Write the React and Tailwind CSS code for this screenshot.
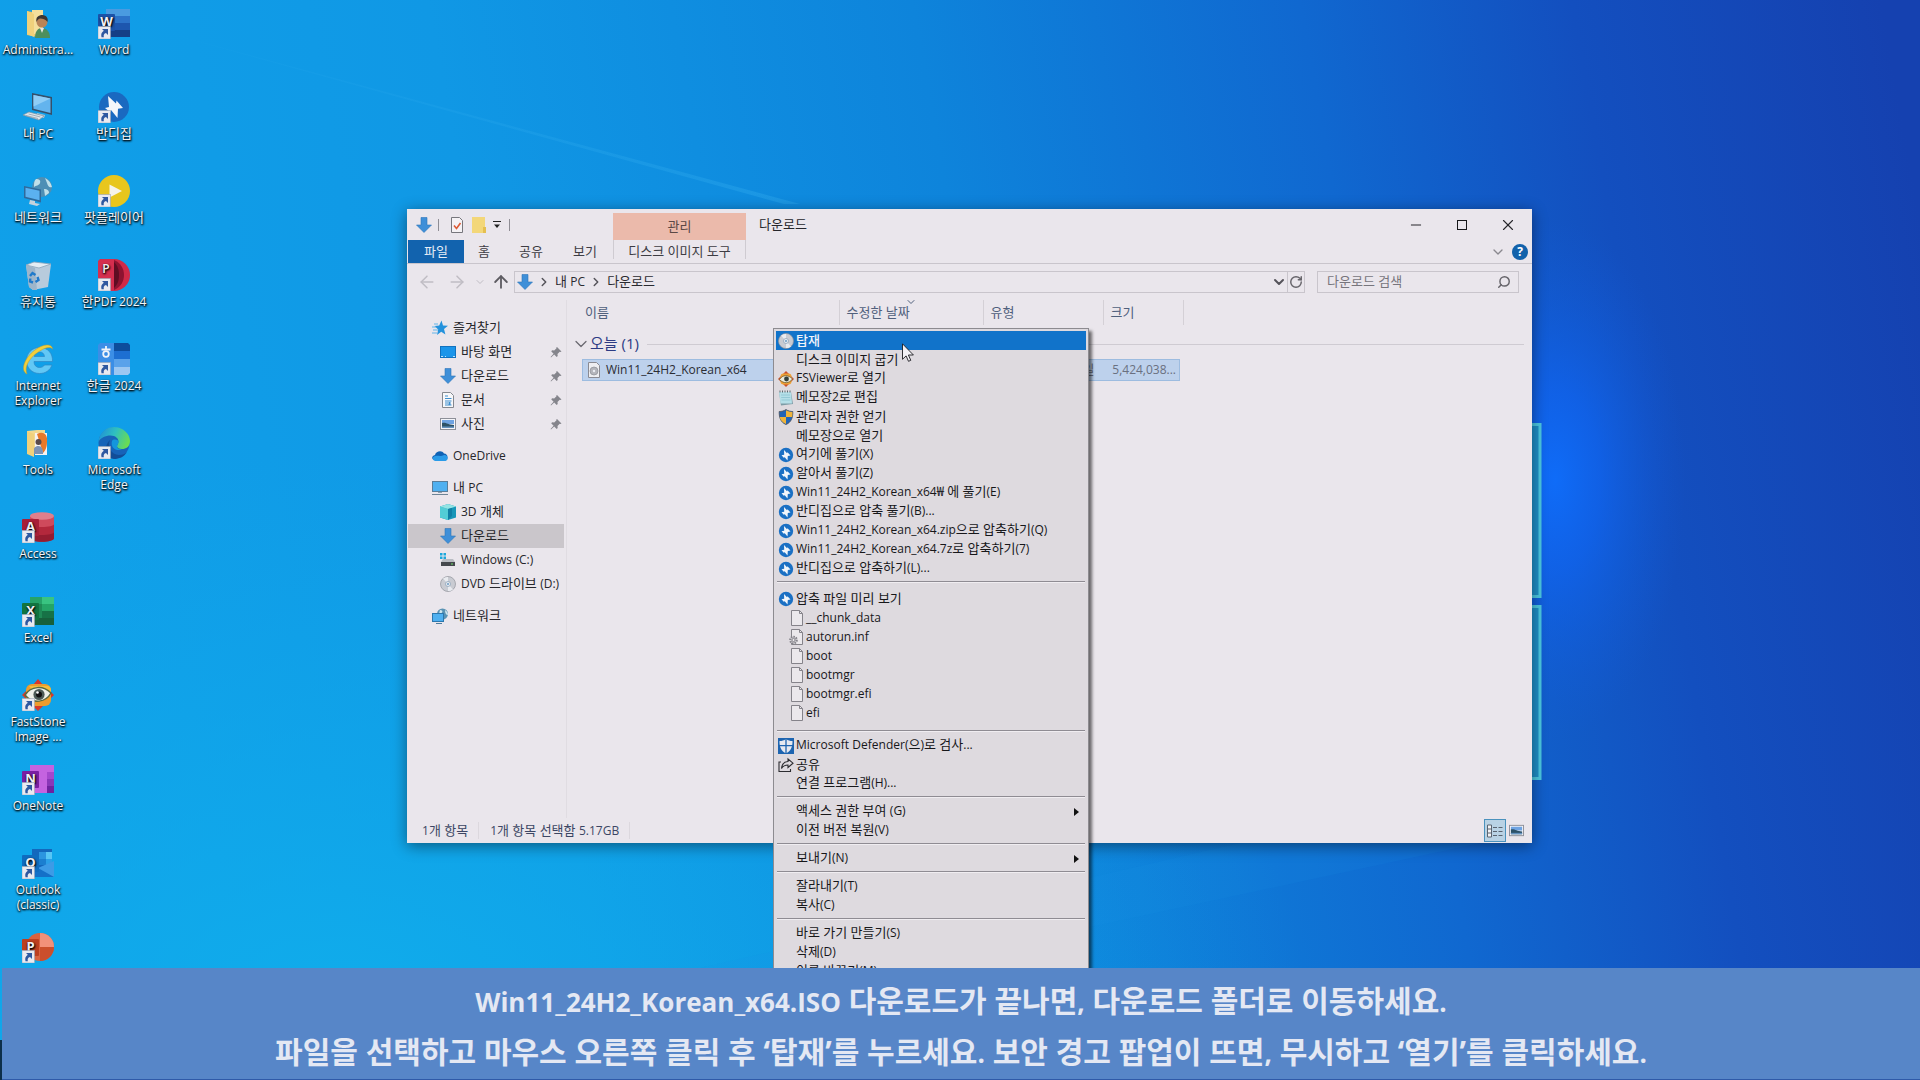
import { ChevronDown, ChevronRight, ArrowLeft, ArrowRight, ArrowUp, RotateCw, Search, Minus, X } from "lucide-react";

/* ---------- text ---------- */

// Latin runs are set a little smaller than the Hangul around them
function Label({ children, className = "", latin = "text-[12px]" }) {
  return (
    <span className={`whitespace-pre ${className}`}>
      {children.split(/([!-~]+)/).map((run, i) =>
        i % 2 ? (
          <span key={i} className={latin}>
            {run}
          </span>
        ) : (
          run
        )
      )}
    </span>
  );
}

/* ---------- desktop icons ---------- */

function ShortcutArrow() {
  return (
    <g>
      <rect x="0" y="19.500" width="12.500" height="12.500" fill="#e9eaf0" stroke="#9aa3b5" strokeWidth=".6" />
      <path d="M4 22h6v6l-2-2c-2 .6-2.600 1.800-2.200 4.200H3.500c-.8-3 .2-5 2.300-6.400z" fill="#2f58a0" />
    </g>
  );
}

function OfficeLetter({ letter, color, y = 7 }) {
  return (
    <g>
      <rect x="0" y={y} width="17" height="17" rx="1" fill={color} />
      <text x="8.500" y={y + 12} textAnchor="middle" fontSize="13" fontWeight="700" fontFamily="Open Sans" fill="#f3f0f5">
        {letter}
      </text>
    </g>
  );
}

function UserFolder() {
  return (
    <svg viewBox="0 0 32 32" className="size-8">
      <path d="M5 4l10 2v24L5 28z" fill="#ecc766" />
      <path d="M10 3h11v24H10z" fill="#f5df9c" />
      <path d="M5 4l7 3v23l-7-3z" fill="#f0d17c" />
      <path d="M13 31c0-7 3-10 7-10s8 3 8 10z" fill="#4d8f5e" />
      <path d="M18 21l2 5 2-5z" fill="#e9e4e4" />
      <circle cx="20" cy="15" r="5.500" fill="#b98458" />
      <path d="M14.500 15c-1-5 2-7 6-7 4 .4 6 3 5 7-2-3-5-3.500-7-3.500-2 0-3 1.500-4 3.500z" fill="#3c3532" />
    </svg>
  );
}

function PcIcon() {
  return (
    <svg viewBox="0 0 32 32" className="size-8">
      <path d="M10 2l20 4v18l-20-5z" fill="#35506b" />
      <path d="M11.500 4l17 3.500v14.500l-17-4.200z" fill="#63b4ee" />
      <path d="M11.500 4l17 3.500-17 8z" fill="#8fcdf6" />
      <path d="M15 22l8 2-1 3-8-2z" fill="#b9c6d0" />
      <path d="M1 24l6-3 15 4-5 4z" fill="#dfe6ea" stroke="#7d92a2" strokeWidth=".7" />
      <path d="M4 24.500l12 3M6.500 23l12 3" stroke="#8fa0ae" strokeWidth=".8" />
    </svg>
  );
}

function NetworkIcon({ className = "size-8" }) {
  return (
    <svg viewBox="0 0 32 32" className={className}>
      <circle cx="20" cy="12" r="10" fill="#4e8fb5" />
      <path d="M14 4c3 0 5 1 4 4s-4 2-6 4c0-4 0-6 2-8zM23 3c4 2 6 5 7 9-3 1-4-1-5-4zM22 14c3 0 5 1 5 4l-4 3z" fill="#bfe0ea" />
      <path d="M2 11l17 3.500v13L2 23z" fill="#2f6a9c" />
      <path d="M3.500 12.800l14 3v9.500l-14-3.500z" fill="#5bb1f0" />
      <path d="M8 25l5 1v2l5 1-3 2-8-2z" fill="#c4d2dc" />
    </svg>
  );
}

// the little tree version has a flat screen in front of the globe
function NetworkSmall() {
  return (
    <svg viewBox="0 0 16 16" className="size-4">
      <circle cx="10.500" cy="6" r="5.500" fill="#5a93b4" />
      <path d="M8 2c2 0 3 1 2 2.500S8 5 7 6zM13 2c2 1 3 3 3 5-2 0-3-2-3-5z" fill="#cfe6ee" />
      <rect x=".5" y="5.500" width="11" height="8" fill="#4fb0f0" stroke="#2c77ad" />
      <path d="M4 15.500h6" stroke="#4f7d9c" />
    </svg>
  );
}

function RecycleBin() {
  return (
    <svg viewBox="0 0 32 32" className="size-8">
      <path d="M4 6l25-1-3 23-15 3-4-3z" fill="#b8cbdc" />
      <path d="M4 6l9 3 2 22-4 0-4-3z" fill="#9db5ca" />
      <path d="M4 6l8-3 17 2-12 4z" fill="#e4edf4" stroke="#8da5ba" strokeWidth=".8" />
      <g fill="none" stroke="#1f7acb" strokeWidth="2.400">
        <path d="M8 17l2.500-3 3 2" />
        <path d="M15.500 18l1 3-3 2" />
        <path d="M11 23.500l-3-1 .3-3" />
      </g>
    </svg>
  );
}

function InternetExplorer() {
  return (
    <svg viewBox="0 0 32 32" className="size-8">
      <path
        d="M30.500 18.500H12c0 3.500 2 6 5.500 6 2.500 0 4-1 5-2.500h7.500c-2 5.500-6.500 8.500-12.500 8.500C10 30.500 4.500 25 4.500 17.500S10 4.500 17.500 4.500c8.500 0 13.500 6 13 14zm-8-5c-.4-3-2-4.500-5-4.500s-4.700 1.500-5.300 4.500z"
        fill="#62c8f5"
        stroke="#2f86c4"
        strokeWidth=".7"
      />
      <path d="M5 31C-2 28 2 15 13 7 21 1 30 0 30.500 6c-2-3-8-1.500-15 3.500C7 15.500 2 24 5 31z" fill="#f1cf3c" stroke="#c69d22" strokeWidth=".5" />
    </svg>
  );
}

function ToolsFolder() {
  return (
    <svg viewBox="0 0 32 32" className="size-8">
      <path d="M5 4l10-1h8v24H5z" fill="#f2d98f" />
      <path d="M13 6h12v22H13z" fill="#f6f3f2" />
      <path d="M15 7c6-3 11 0 10 8 0 6-2 9-4 11z" fill="#e8792a" />
      <circle cx="16.500" cy="15" r="3" fill="#584a4c" />
      <path d="M11 27c0-6 2-8 5.500-8S21 22 21 27z" fill="#7d93b5" />
      <path d="M5 4l7 3v23l-7-3z" fill="#f0d17c" />
    </svg>
  );
}

function WordIcon() {
  return (
    <svg viewBox="0 0 32 32" className="size-8">
      <path d="M8 2h24v8H8z" fill="#4a9be0" />
      <path d="M8 9h24v7H8z" fill="#2c73c9" />
      <path d="M8 16h24v7H8z" fill="#1d56ae" />
      <path d="M8 23h24v7H8z" fill="#153f86" />
      <OfficeLetter letter="W" color="#1b52a8" />
      <ShortcutArrow />
    </svg>
  );
}

function BandizipIcon() {
  return (
    <svg viewBox="0 0 32 32" className="size-8">
      <circle cx="16" cy="16" r="15" fill="#1a69c0" />
      <path d="M10 5l8 7.500.500-3L25 17l-5 .8-.5 9.200-6.500-8-.5 2.500L7 17l4-1z" fill="#f4f7fb" />
      <ShortcutArrow />
    </svg>
  );
}

function PotPlayer() {
  return (
    <svg viewBox="0 0 32 32" className="size-8">
      <circle cx="16" cy="16" r="16" fill="#e8c61d" />
      <path d="M11.500 9.500L24 16l-12.500 6.500z" fill="#f6f3ea" />
      <ShortcutArrow />
    </svg>
  );
}

function HanPdf() {
  return (
    <svg viewBox="0 0 32 32" className="size-8">
      <path d="M13 0h3a16 16 0 010 32h-3z" fill="#d02a48" />
      <path d="M16 1c7 3 10 9 10 15s-3 12-10 15z" fill="#8e1330" />
      <path d="M16 3c4 4 5 8 5 13s-1 9-5 13z" fill="#5e0d22" />
      <path d="M2 0h14v32H0V2z" fill="#d42e4e" />
      <text x="8" y="14" textAnchor="middle" fontSize="12" fontWeight="600" fontFamily="Open Sans" fill="#f4eef0">
        P
      </text>
      <ShortcutArrow />
    </svg>
  );
}

function Hangul2024() {
  return (
    <svg viewBox="0 0 32 32" className="size-8">
      <path d="M16 0h14l2 2v6H16z" fill="#0d4d9c" />
      <path d="M16 8h16v8H16z" fill="#1d6fd2" />
      <path d="M16 16h16v8H16z" fill="#5aa2ea" />
      <path d="M16 24h16v6l-2 2H16z" fill="#9cc7f2" />
      <path d="M2 0h14v32H0V2z" fill="#3b8ee6" />
      <g fill="none" stroke="#f0f4fa" strokeWidth="1.800">
        <path d="M8 3v3M3.500 6.500h9" />
        <circle cx="8" cy="11" r="2.800" />
      </g>
      <ShortcutArrow />
    </svg>
  );
}

function EdgeIcon() {
  return (
    <svg viewBox="0 0 32 32" className="size-8">
      <defs>
        <linearGradient id="edgeTop" x1="0" y1=".2" x2="1" y2=".5">
          <stop offset="0" stopColor="#1f8fd8" />
          <stop offset=".5" stopColor="#2fbfc0" />
          <stop offset="1" stopColor="#6bdc52" />
        </linearGradient>
      </defs>
      <circle cx="16" cy="16" r="15.500" fill="#1763b8" />
      <path d="M.5 15C1 6 8 0 16 0c9 0 16 7 16 14 0 6-4 8-8 8-3 0-5-1-5-3 0-1 1.500-2 1.500-4.500 0-3-3-6-8-6S2 11 .5 15z" fill="url(#edgeTop)" />
      <path d="M12 13c-3 6 1 15 9 15 4 0 6-1 8-3-3 5-8 7-13 7C7 30 5 20 12 13z" fill="#124d97" />
      <path d="M14 14c1-2 6-2 6.500 1 0 2-1.500 3-1.500 4.500 0 2 2 3 5 3-5 2-12-1-10-8.500z" fill="#1496dc" />
      <ShortcutArrow />
    </svg>
  );
}

function AccessIcon() {
  return (
    <svg viewBox="0 0 32 32" className="size-8">
      <path d="M8 5v22c0 5 24 5 24 0V5z" fill="#b3283c" />
      <path d="M8 13c0 4 24 4 24 0V5H8z" fill="#cf4a5c" />
      <path d="M8 21c0 4 24 4 24 0v6c0 5-24 5-24 0z" fill="#951c30" />
      <ellipse cx="20" cy="5" rx="12" ry="3.800" fill="#df7f8c" />
      <OfficeLetter letter="A" color="#a81f38" y={8} />
      <ShortcutArrow />
    </svg>
  );
}

function ExcelIcon() {
  return (
    <svg viewBox="0 0 32 32" className="size-8">
      <path d="M8 2h24v28H8z" fill="#1f8a55" />
      <path d="M20 2h12v7H20z" fill="#39c481" />
      <path d="M8 2h12v7H8z" fill="#26a368" />
      <path d="M20 9h12v7H20z" fill="#25a566" />
      <path d="M8 23h24v7H8z" fill="#17603b" />
      <path d="M20 16h12v7H20z" fill="#177246" />
      <OfficeLetter letter="X" color="#127440" y={8} />
      <ShortcutArrow />
    </svg>
  );
}

function FastStone() {
  return (
    <svg viewBox="0 0 32 32" className="size-8">
      <path d="M16 0l5 6H11zM32 16l-5 5V11zM16 32l-5-5h10zM0 16l5-5v10z" fill="#d8392b" />
      <rect x="4" y="5" width="25" height="22" rx="6" fill="#ee9c2d" />
      <path d="M7 7h18c3 0 4 2 4 5v4H14z" fill="#f5bd3c" />
      <path d="M3 16c6-9 18-10 26-2-5 9-18 12-26 2z" fill="#eef0e8" stroke="#5b6a3f" strokeWidth="1.500" />
      <circle cx="17" cy="15.500" r="5.600" fill="#4c5a55" />
      <circle cx="17" cy="15.500" r="3" fill="#111" />
      <circle cx="15.500" cy="13.500" r="1.300" fill="#fff" />
      <ShortcutArrow />
    </svg>
  );
}

function OneNote() {
  return (
    <svg viewBox="0 0 32 32" className="size-8">
      <path d="M8 2h24v28H8z" fill="#c463e0" />
      <path d="M25 9h7v7h-7z" fill="#a548cc" />
      <path d="M25 16h7v7h-7z" fill="#8a37b8" />
      <path d="M25 23h7v7h-7z" fill="#6f22a0" />
      <OfficeLetter letter="N" color="#7a1fa2" y={8} />
      <ShortcutArrow />
    </svg>
  );
}

function OutlookIcon() {
  return (
    <svg viewBox="0 0 32 32" className="size-8">
      <path d="M10 2h20v20H10z" fill="#1368bd" />
      <path d="M17 5h7v7h-7z" fill="#2b95e0" />
      <path d="M24 5h6v7h-6z" fill="#58c6f5" />
      <path d="M17 12h7v6h-7z" fill="#1b7fd0" />
      <path d="M24 12h6v6h-6z" fill="#2ba0e8" />
      <path d="M16 21l16-6v15H8z" fill="#1470c8" />
      <path d="M16 21l16 9V14z" fill="#3d9be6" />
      <OfficeLetter letter="O" color="#0f6cbf" y={8} />
      <ShortcutArrow />
    </svg>
  );
}

function PowerPointIcon() {
  return (
    <svg viewBox="0 0 32 32" className="size-8">
      <circle cx="18" cy="16" r="14" fill="#d9623f" />
      <path d="M18 2a14 14 0 0114 14H18z" fill="#f2917a" />
      <path d="M32 16a14 14 0 01-14 14V16z" fill="#cb4f2c" />
      <OfficeLetter letter="P" color="#bd3f20" y={8} />
      <ShortcutArrow />
    </svg>
  );
}

/* ---------- small icons ---------- */

function DownArrow({ className = "size-4" }) {
  return (
    <svg viewBox="0 0 16 16" className={className}>
      <path d="M5 .5h6V8h4.500L8 15.500.500 8H5z" fill="#3f8fd8" stroke="#2d75bb" strokeWidth=".6" />
    </svg>
  );
}

function StarIcon() {
  return (
    <svg viewBox="0 0 16 16" className="size-4">
      <path d="M9.500.5l1.500 5 5 .3-4 3.200 1.400 5.500-4.200-2.800L5 15l1.200-5.500L2.500 6l4.700-.5z" fill="#2492dc" />
      <path d="M2 4h4M0 7h4M1 10h5M0 13h5" stroke="#63b5ea" />
    </svg>
  );
}

function DesktopSmall() {
  return (
    <svg viewBox="0 0 16 16" className="size-4">
      <rect x=".5" y="2.500" width="15" height="11" fill="#1b95ea" stroke="#1272bf" />
      <path d="M1 12.500h2M5 12.500h1M13 12.500h2" stroke="#bfe2fa" />
    </svg>
  );
}

function DocSmall() {
  return (
    <svg viewBox="0 0 16 16" className="size-4">
      <path d="M2.500.5h8l3 3v12h-11z" fill="#f7f7f9" stroke="#85888f" />
      <path d="M5 4h3M5 6.500h6.500M5 9h6.500M5 11h3M5 13h6.500" stroke="#3f8fce" />
      <path d="M9.500 10v3" stroke="#3f8fce" strokeWidth="2" />
    </svg>
  );
}

function PictureSmall({ className = "size-4" }) {
  return (
    <svg viewBox="0 0 16 16" className={className}>
      <rect x=".5" y="2.500" width="15" height="11" fill="#f4f4f8" stroke="#8d8f98" />
      <path d="M2 4h12v4H2z" fill="#6fa3e2" />
      <path d="M2 7c4-1 6 2 12 2v3H2z" fill="#2d5268" />
      <path d="M2 10.500h12V12H2z" fill="#6492bf" />
    </svg>
  );
}

function OneDriveIcon() {
  return (
    <svg viewBox="0 0 16 16" className="size-4">
      <path d="M3 12C-1 12-.5 7.500 3 7c1-4 7-5 9-1.500 4 0 5 6 1 7z" fill="#0f62b5" />
      <path d="M3 13c-3-1-3-4 0-5 3-1 5 1 9-1 4-.5 5 5.500 1.500 6z" fill="#2a9be8" />
    </svg>
  );
}

function PcSmall() {
  return (
    <svg viewBox="0 0 16 16" className="size-4">
      <rect x=".5" y="1.500" width="15" height="10" fill="#4fb0f0" stroke="#5a7d98" />
      <path d="M6 12.500h4" stroke="#8ca0b0" />
      <path d="M0 14.500h16" stroke="#6d8496" />
    </svg>
  );
}

function CubeIcon() {
  return (
    <svg viewBox="0 0 16 16" className="size-4">
      <path d="M8 0l8 2.500v11L8 16l-8-2.500v-11z" fill="#1796b8" />
      <path d="M0 2.500L8 5v11l-8-2.500z" fill="#52cdd6" />
      <path d="M0 2.500L8 0l8 2.500L8 5z" fill="#93e4e4" />
      <path d="M8 5l4-1v8l-4 4z" fill="#0f7fa5" />
    </svg>
  );
}

function DriveIcon() {
  return (
    <svg viewBox="0 0 16 16" className="size-4">
      <path d="M0 1h2.500v2.500H0zM3.500 1H6v2.500H3.500zM0 4.500h2.500V7H0zM3.500 4.500H6V7H3.500z" fill="#1ba7dc" />
      <path d="M3 7h10l2 3H1z" fill="#b9bcc2" />
      <path d="M1 10h14v4H1z" fill="#45484d" />
      <path d="M11 12h2" stroke="#6ee06a" />
    </svg>
  );
}

function DiscIcon({ className = "size-4" }) {
  return (
    <svg viewBox="0 0 16 16" className={className}>
      <circle cx="8" cy="8" r="7.500" fill="#c9cbd2" stroke="#90939b" strokeWidth=".7" />
      <path d="M8 8L3 2.500A7 7 0 018 1zM8 8l5 5.500A7 7 0 018 15z" fill="#e9ebf0" />
      <circle cx="8" cy="8" r="2.500" fill="#e9edf2" stroke="#8fa4ba" strokeWidth=".8" />
      <circle cx="8" cy="8" r="1" fill="#6a98c2" />
    </svg>
  );
}

function PinIcon() {
  return (
    <svg viewBox="0 0 12 12" className="size-3">
      <path d="M7 1l4.500 4.500-1 .5-.8-.3L7.500 8l.2 2-1 1L4.200 8.500 1 11.500l-.4-.4 3-3.300L1.200 5.300l1-1 2 .2L6.500 2.200 6.300 1.500z" fill="#85858c" />
    </svg>
  );
}

function IsoFile({ className = "size-4" }) {
  return (
    <svg viewBox="0 0 16 16" className={className}>
      <path d="M2.500.5h8l3 3v12h-11z" fill="#eeeef1" stroke="#8a8a92" />
      <circle cx="8" cy="9" r="4" fill="#b4b5bb" stroke="#8e9097" strokeWidth=".7" />
      <circle cx="8" cy="9" r="1.200" fill="#eceef2" />
    </svg>
  );
}

function PropertiesIcon() {
  return (
    <svg viewBox="0 0 16 16" className="size-4">
      <path d="M2.500.5h8l3 3v12h-11z" fill="#f5f2f5" stroke="#77777d" />
      <path d="M5 8.500l2.500 3L11.500 6" fill="none" stroke="#dd5a35" strokeWidth="1.600" />
    </svg>
  );
}

function FolderSmall() {
  return (
    <svg viewBox="0 0 16 16" className="size-4">
      <path d="M1 0h13v16H1z" fill="#f3d779" />
      <path d="M12 10h3v6h-3z" fill="#e5bf50" />
    </svg>
  );
}

function BandizipSmall() {
  return (
    <svg viewBox="0 0 16 16" className="size-4">
      <circle cx="8" cy="8" r="7.200" fill="#1b70c4" />
      <path d="M6 3l3 3.300.500-1L12.500 8.500l-2.700.5-.3 4.500L6.500 10l-.5 1L3.500 8.200l2.700-.5z" fill="#f2f6fb" />
    </svg>
  );
}

function FastStoneSmall() {
  return (
    <svg viewBox="0 0 16 16" className="size-4">
      <path d="M8 0l8 8-8 8-8-8z" fill="#c9502c" />
      <rect x="2.500" y="2.500" width="11" height="11" rx="3" fill="#eea136" />
      <path d="M1.500 8.500c3-5 9-5 13-.5-3 4.500-9 5-13 .5z" fill="#ecebdc" stroke="#6c5a2c" strokeWidth=".8" />
      <circle cx="8.500" cy="8" r="2.400" fill="#33403a" />
    </svg>
  );
}

function NotepadIcon() {
  return (
    <svg viewBox="0 0 16 16" className="size-4">
      <path d="M1 2h12l2 12-12 1.500z" fill="#7d9ca6" />
      <path d="M1 2h12l1 11.500H2.500z" fill="#b5dfe8" />
      <path d="M3 5h9M3.200 7.500h9M3.500 10h9" stroke="#8dc3d0" strokeWidth=".8" />
      <path d="M2 .5v2M4.500.5v2M7 .5v2M9.500.5v2M12 .5v2" stroke="#5d6b70" />
    </svg>
  );
}

function ShieldIcon() {
  return (
    <svg viewBox="0 0 16 16" className="size-4">
      <path d="M8 .500C6 2 3.500 2.500 1.200 2.500 1 9 3 13.500 8 15.500c5-2 7-6.500 6.800-13C12.500 2.500 10 2 8 .500z" fill="#2164b8" stroke="#4a4e57" strokeWidth=".8" />
      <path d="M8 1.200v6.800h6.200c.2-1.500.3-3 .2-5C12 3 10 2.300 8 1.200zM8 8v7C4.500 13.500 2.300 11 1.700 8z" fill="#f0b43a" />
    </svg>
  );
}

function DefenderIcon() {
  return (
    <svg viewBox="0 0 16 16" className="size-4">
      <path d="M0 0h16v16H0z" fill="#1d64b0" />
      <path d="M8 1C6 2.500 4 3 1.500 3 1.300 9 3.500 13.500 8 15.300 12.500 13.500 14.700 9 14.500 3 12 3 10 2.500 8 1z" fill="#e6e9f0" />
      <path d="M8 0v16M1 7.700h14" stroke="#1d64b0" strokeWidth="1.300" />
    </svg>
  );
}

function ShareIcon() {
  return (
    <svg viewBox="0 0 16 16" className="size-4" fill="none" stroke="#2c2c30" strokeWidth="1.100">
      <path d="M3 5H1v9.500h11.500V12" />
      <path d="M10 2l5 4.200-5 4.300V8C7 8 5 9 3.500 11.500 4 7 6.500 4.700 10 4.500z" />
    </svg>
  );
}

function PageIcon({ gear }) {
  return (
    <svg viewBox="0 0 16 16" className="size-4">
      <path d="M3.500.5h8l3 3v12h-11z" fill="#ebe8ec" stroke="#85838a" />
      <path d="M11.500.5v3h3" fill="none" stroke="#85838a" />
      {gear && <circle cx="5.500" cy="11" r="3.300" fill="#d9d7dc" stroke="#85838a" strokeWidth="2" strokeDasharray="1.500 1" />}
      {gear && <circle cx="5.500" cy="11" r="1.600" fill="#ebe8ec" stroke="#85838a" />}
    </svg>
  );
}

/* ---------- data ---------- */

const DESKTOP = [
  [
    { lines: ["Administra..."], Icon: UserFolder },
    { lines: ["내 PC"], Icon: PcIcon },
    { lines: ["네트워크"], Icon: NetworkIcon },
    { lines: ["휴지통"], Icon: RecycleBin },
    { lines: ["Internet", "Explorer"], Icon: InternetExplorer },
    { lines: ["Tools"], Icon: ToolsFolder },
    { lines: ["Access"], Icon: AccessIcon },
    { lines: ["Excel"], Icon: ExcelIcon },
    { lines: ["FastStone", "Image ..."], Icon: FastStone },
    { lines: ["OneNote"], Icon: OneNote },
    { lines: ["Outlook", "(classic)"], Icon: OutlookIcon },
    { lines: [], name: "PowerPoint", Icon: PowerPointIcon },
  ],
  [
    { lines: ["Word"], Icon: WordIcon },
    { lines: ["반디집"], Icon: BandizipIcon },
    { lines: ["팟플레이어"], Icon: PotPlayer },
    { lines: ["한PDF 2024"], Icon: HanPdf },
    { lines: ["한글 2024"], Icon: Hangul2024 },
    { lines: ["Microsoft", "Edge"], Icon: EdgeIcon },
  ],
];

const SIDEBAR = [
  [
    { label: "즐겨찾기", icon: <StarIcon /> },
    { label: "바탕 화면", icon: <DesktopSmall />, child: true, pinned: true },
    { label: "다운로드", icon: <DownArrow />, child: true, pinned: true },
    { label: "문서", icon: <DocSmall />, child: true, pinned: true },
    { label: "사진", icon: <PictureSmall />, child: true, pinned: true },
  ],
  [{ label: "OneDrive", icon: <OneDriveIcon /> }],
  [
    { label: "내 PC", icon: <PcSmall /> },
    { label: "3D 개체", icon: <CubeIcon />, child: true },
    { label: "다운로드", icon: <DownArrow />, child: true, active: true },
    { label: "Windows (C:)", icon: <DriveIcon />, child: true },
    { label: "DVD 드라이브 (D:)", icon: <DiscIcon />, child: true },
  ],
  [{ label: "네트워크", icon: <NetworkSmall /> }],
];

const MENU = [
  [
    { label: "탑재", icon: <DiscIcon />, active: true },
    { label: "디스크 이미지 굽기" },
    { label: "FSViewer로 열기", icon: <FastStoneSmall /> },
    { label: "메모장2로 편집", icon: <NotepadIcon /> },
    { label: "관리자 권한 얻기", icon: <ShieldIcon /> },
    { label: "메모장으로 열기" },
    { label: "여기에 풀기(X)", icon: <BandizipSmall /> },
    { label: "알아서 풀기(Z)", icon: <BandizipSmall /> },
    { label: "Win11_24H2_Korean_x64₩ 에 풀기(E)", icon: <BandizipSmall /> },
    { label: "반디집으로 압축 풀기(B)...", icon: <BandizipSmall /> },
    { label: "Win11_24H2_Korean_x64.zip으로 압축하기(Q)", icon: <BandizipSmall /> },
    { label: "Win11_24H2_Korean_x64.7z로 압축하기(7)", icon: <BandizipSmall /> },
    { label: "반디집으로 압축하기(L)...", icon: <BandizipSmall /> },
  ],
  [
    { label: "압축 파일 미리 보기", icon: <BandizipSmall /> },
    { label: "__chunk_data", icon: <PageIcon />, child: true },
    { label: "autorun.inf", icon: <PageIcon gear />, child: true },
    { label: "boot", icon: <PageIcon />, child: true },
    { label: "bootmgr", icon: <PageIcon />, child: true },
    { label: "bootmgr.efi", icon: <PageIcon />, child: true },
    { label: "efi", icon: <PageIcon />, child: true },
  ],
  [
    { label: "Microsoft Defender(으)로 검사...", icon: <DefenderIcon /> },
    { label: "공유", icon: <ShareIcon /> },
    { label: "연결 프로그램(H)..." },
  ],
  [{ label: "액세스 권한 부여 (G)", submenu: true }, { label: "이전 버전 복원(V)" }],
  [{ label: "보내기(N)", submenu: true }],
  [{ label: "잘라내기(T)" }, { label: "복사(C)" }],
  [{ label: "바로 가기 만들기(S)" }, { label: "삭제(D)" }, { label: "이름 바꾸기(M)" }],
];

/* ---------- sections ---------- */

function Wallpaper() {
  return (
    <svg viewBox="0 0 1920 1080" preserveAspectRatio="none" className="absolute inset-0 size-full" aria-hidden="true">
      <defs>
        <linearGradient id="base" x1="0" y1="0.300" x2="1" y2="0.200">
          <stop offset="0" stopColor="#10a0e9" />
          <stop offset=".25" stopColor="#1098e5" />
          <stop offset=".5" stopColor="#0e84db" />
          <stop offset=".7" stopColor="#1068d0" />
          <stop offset=".84" stopColor="#134fbf" />
          <stop offset="1" stopColor="#1541b0" />
        </linearGradient>
        <radialGradient id="cyan" cx=".18" cy=".92" r=".5">
          <stop offset="0" stopColor="#10b0ec" stopOpacity=".8" />
          <stop offset="1" stopColor="#10a8ea" stopOpacity="0" />
        </radialGradient>
        <radialGradient id="glow" cx=".5" cy=".5" r=".5">
          <stop offset="0" stopColor="#0f6cf8" />
          <stop offset=".35" stopColor="#1064f0" stopOpacity=".75" />
          <stop offset="1" stopColor="#125ad8" stopOpacity="0" />
        </radialGradient>
        <linearGradient id="ray" x1="0" y1="0" x2="1" y2="0">
          <stop offset="0" stopColor="#3bb4f2" stopOpacity="0" />
          <stop offset="1" stopColor="#3bb4f2" stopOpacity=".3" />
        </linearGradient>
      </defs>
      <rect width="1920" height="1080" fill="url(#base)" />
      <rect width="1920" height="1080" fill="url(#cyan)" />
      <path d="M120 20L800 204H784z" fill="url(#ray)" />
      <path d="M700 968L1240 843H1480L900 968z" fill="#1590e4" opacity=".12" />
      <ellipse cx="1555" cy="480" rx="130" ry="260" fill="url(#glow)" />
      <g fill="#1f8fc8" stroke="#4cc8e2" strokeWidth="3">
        <rect x="1400" y="424.500" width="140" height="172" />
        <rect x="1400" y="606.500" width="140" height="172" />
      </g>
    </svg>
  );
}

function DesktopIcon({ lines, name, Icon }) {
  return (
    <button
      aria-label={name}
      className="flex h-[84px] w-[76px] flex-col items-center pt-[7px] leading-[15px] text-[#f4f6fa] [text-shadow:1px_1px_2px_#000,0_1px_2px_#000]"
    >
      <Icon />
      <span className="mt-[3px] flex flex-col items-center">
        {lines.map((line) => (
          <Label key={line}>{line}</Label>
        ))}
      </span>
    </button>
  );
}

function TitleBar() {
  return (
    <header className="flex h-[31px] items-stretch pr-px">
      <div className="flex w-[206px] items-center gap-1.5 pl-[9px]">
        <DownArrow />
        <i className="mr-1 h-3 w-px bg-[#8f8d94]" />
        <button aria-label="속성">
          <PropertiesIcon />
        </button>
        <button aria-label="새 폴더">
          <FolderSmall />
        </button>
        <button aria-label="빠른 실행 도구 모음 사용자 지정">
          <svg viewBox="0 0 8 8" className="size-2">
            <path d="M0 .5h8" stroke="#222" />
            <path d="M1 3.500h6L4 7z" fill="#222" />
          </svg>
        </button>
        <i className="ml-0.5 h-3 w-px bg-[#8f8d94]" />
      </div>
      <div className="mt-1 flex w-[133px] items-center justify-center bg-[#ebbaab] text-[#5b4845]">
        <Label className="pb-0.5">관리</Label>
      </div>
      <h1 className="flex flex-1 items-center pl-[13px]">
        <Label className="pb-0.5">다운로드</Label>
      </h1>
      <div className="flex items-center">
        <button aria-label="최소화" className="flex w-[46px] justify-center">
          <Minus className="size-4" strokeWidth={1.500} />
        </button>
        <button aria-label="최대화" className="flex w-[46px] justify-center">
          <svg viewBox="0 0 10 10" className="size-[10px]">
            <rect x=".5" y=".5" width="9" height="9" fill="none" stroke="#17171a" />
          </svg>
        </button>
        <button aria-label="닫기" className="flex w-[46px] justify-center">
          <X className="size-[18px]" strokeWidth={1.500} />
        </button>
      </div>
    </header>
  );
}

function RibbonTabs() {
  return (
    <nav className="flex h-6 items-stretch border-b border-[#c9c5cc] px-px text-[#3e3d44]">
      <button className="w-14 bg-[#1263ae] pb-0.5 text-[#e6edf6]">
        <Label>파일</Label>
      </button>
      <button className="w-10 pb-0.5">
        <Label>홈</Label>
      </button>
      <button className="w-[54px] pb-0.5">
        <Label>공유</Label>
      </button>
      <button className="w-[54px] pb-0.5">
        <Label>보기</Label>
      </button>
      <button className="mb-1 ml-px w-[133px] border-x border-[#cfcbd1] pt-0.5">
        <Label>디스크 이미지 도구</Label>
      </button>
      <div className="flex flex-1 items-center justify-end gap-1.5 pr-[3px]">
        <button aria-label="리본 확장">
          <ChevronDown className="size-4 text-[#8a888f]" />
        </button>
        <button aria-label="도움말" className="size-4 rounded-full bg-[#1262ab] text-[12px] leading-4 font-bold text-white">
          ?
        </button>
      </div>
    </nav>
  );
}

function AddressBar() {
  return (
    <div className="flex h-9 items-center pr-[13px] text-[#2a2a30]">
      <div className="flex w-[107px] items-center pl-[10px]">
        <button aria-label="뒤로" className="w-[30px]">
          <ArrowLeft className="size-5 text-[#c0bdc4]" strokeWidth={1.800} />
        </button>
        <button aria-label="앞으로" className="w-[27px]">
          <ArrowRight className="size-5 text-[#c0bdc4]" strokeWidth={1.800} />
        </button>
        <button aria-label="최근 위치" className="w-[17px]">
          <ChevronDown className="size-3 text-[#c0bdc4]" />
        </button>
        <button aria-label="위로">
          <ArrowUp className="size-5 text-[#5e5c62]" strokeWidth={2.200} />
        </button>
      </div>
      <div className="flex h-[22px] flex-1 items-stretch border border-[#c9c5cc]">
        <nav className="flex flex-1 items-center pl-0.5">
          <DownArrow />
          <ChevronRight className="mx-1 size-[14px] text-[#55535a]" strokeWidth={2.500} />
          <a href="#pc" className="pb-0.5">
            <Label>내 PC</Label>
          </a>
          <ChevronRight className="mx-1 size-[14px] text-[#55535a]" strokeWidth={2.500} />
          <a href="#downloads" className="pb-0.5">
            <Label>다운로드</Label>
          </a>
        </nav>
        <button aria-label="이전 위치">
          <ChevronDown className="size-4 text-[#55535a]" strokeWidth={3} />
        </button>
        <button aria-label="새로 고침" className="border-l border-[#c9c5cc] px-px">
          <RotateCw className="size-[14px] text-[#66646a]" strokeWidth={2.500} />
        </button>
      </div>
      <label className="ml-3 flex h-[22px] w-[202px] items-center border border-[#c9c5cc] pr-[7px] pl-[9px]">
        <input
          type="text"
          aria-label="다운로드 검색"
          placeholder="다운로드 검색"
          className="min-w-0 flex-1 bg-transparent pb-0.5 outline-none placeholder:text-[#77757c]"
        />
        <Search className="size-[14px] -scale-x-100 text-[#66646a]" strokeWidth={2.500} />
      </label>
    </div>
  );
}

function Sidebar() {
  return (
    <nav className="flex w-[160px] shrink-0 flex-col gap-2 border-r border-[#e0dce2] pt-4 pl-px">
      {SIDEBAR.map((group) => (
        <ul key={group[0].label}>
          {group.map((item) => (
            <li key={item.label}>
              <a
                href="#folder"
                className={`mr-0.5 flex h-6 items-center pr-0.5 ${item.child ? "pl-8" : "pl-6"} ${item.active ? "bg-[#cac6cb]" : ""}`}
              >
                {item.icon}
                <Label className="ml-[5px] flex-1 pb-0.5">{item.label}</Label>
                {item.pinned && <PinIcon />}
              </a>
            </li>
          ))}
        </ul>
      ))}
    </nav>
  );
}

function FileTable() {
  const cell = "border-y border-[#9dbce0] bg-[#bdd1ec] h-[22px] flex items-center text-[#6a7080]";
  const head = "border-r border-[#d4d0d6] p-0 pb-0.5 font-normal";
  return (
    <table className="w-full table-fixed border-collapse self-start text-left">
      <colgroup>
        <col className="w-[264px]" />
        <col className="w-[144px]" />
        <col className="w-[120px]" />
        <col className="w-[80px]" />
        <col />
      </colgroup>
      <thead className="text-[#50607c]">
        <tr className="h-[25px]">
          <th className={`${head} pl-[10px]`}>
            <Label>이름</Label>
          </th>
          <th className={`${head} relative pl-[7px]`}>
            <ChevronDown className="absolute -top-1 left-[65px] size-3" />
            <Label>수정한 날짜</Label>
          </th>
          <th className={`${head} pl-[7px]`}>
            <Label>유형</Label>
          </th>
          <th className={`${head} pl-[7px]`}>
            <Label>크기</Label>
          </th>
          <td />
        </tr>
      </thead>
      <tbody>
        <tr className="h-[34px]">
          <td colSpan={5} className="p-0 pt-1">
            <div className="flex items-center">
              <ChevronDown className="-ml-1 size-5 text-[#6b6971]" strokeWidth={1.500} />
              <span className="-ml-px pb-0.5 text-[15px] text-[#2c3b84]">오늘 (1)</span>
              <i className="ml-2 h-px flex-1 bg-[#cfcbd2]" />
            </div>
          </td>
        </tr>
        <tr>
          <td className="p-0 pl-[7px]">
            <div className={`${cell} border-l pl-[3px]`}>
              <IsoFile />
              <Label className="ml-1 pb-0.5 text-[#2a2c33]">Win11_24H2_Korean_x64</Label>
            </div>
          </td>
          <td className="p-0">
            <div className={cell} />
          </td>
          <td className="p-0">
            <div className={`${cell} pl-[9px]`}>
              <Label className="pb-0.5">디스크 이미지 파일</Label>
            </div>
          </td>
          <td className="p-0 pr-[3px]">
            <div className={`${cell} justify-end border-r pr-[3px]`}>
              <Label className="pb-0.5">5,424,038...</Label>
            </div>
          </td>
          <td />
        </tr>
      </tbody>
    </table>
  );
}

function StatusBar() {
  return (
    <footer className="flex h-[25px] items-center pr-2 pl-[15px] text-[#3c4664]">
      <Label className="border-r border-[#dcd8de] pr-[10px]">1개 항목</Label>
      <Label className="border-r border-[#dcd8de] pr-[10px] pl-[11px]">1개 항목 선택함 5.17GB</Label>
      <div className="ml-auto flex items-center gap-[3px]">
        <button aria-label="자세히" className="flex h-[23px] w-[22px] items-center justify-center border border-[#4b92bd] bg-[#b9d2e4]">
          <svg viewBox="0 0 16 14" className="h-[14px] w-4" stroke="#5b6470">
            <path d="M.5 1h4v12h-4zM.5 5h4M.5 9h4" fill="#f2f2f5" />
            <path d="M6 3.500h4M11.500 3.500h4M6 7.500h4M11.500 7.500h4M6 11.500h4M11.500 11.500h4" />
          </svg>
        </button>
        <button aria-label="큰 아이콘">
          <PictureSmall className="size-[15px]" />
        </button>
      </div>
    </footer>
  );
}

function ExplorerWindow() {
  return (
    <section className="absolute top-[209px] left-[407px] flex h-[634px] w-[1125px] flex-col bg-[#eae6ec] text-[#26262b] shadow-[0_3px_14px_rgba(0,0,0,0.45)]">
      <TitleBar />
      <RibbonTabs />
      <AddressBar />
      <div className="flex min-h-0 flex-1">
        <Sidebar />
        <main className="flex flex-1 pr-2 pl-2">
          <FileTable />
        </main>
      </div>
      <StatusBar />
    </section>
  );
}

function MenuItem({ label, icon, child, active, submenu }) {
  return (
    <button
      role="menuitem"
      className={`flex h-[19px] w-full items-center pr-[7px] ${child ? "pl-3" : "pl-0.5"} ${active ? "bg-[#1173ca] font-medium text-[#f0f4fa]" : ""}`}
    >
      <span className="size-4 shrink-0">{icon}</span>
      <Label className={`ml-0.5 flex-1 text-left ${child ? "" : "pb-0.5"}`}>{label}</Label>
      {submenu && (
        <svg viewBox="0 0 5 8" className="h-2 w-[5px]">
          <path d="M0 0l5 4-5 4z" fill="#111" />
        </svg>
      )}
    </button>
  );
}

function ContextMenu() {
  return (
    <div
      role="menu"
      className="absolute top-[328px] left-[773px] w-[316px] border border-[#8d8b90] bg-[#dedadf] p-0.5 text-[#17171a] shadow-[3px_3px_3px_rgba(0,0,0,0.55)]"
    >
      {MENU.map((group, i) => (
        <div key={i}>
          {i > 0 && <hr className={`mx-px mb-1 border-t-[#8f8c93] border-b border-b-[#f0edf1] ${i === 2 ? "mt-2" : "mt-[3px]"}`} />}
          {i === 1 && <div className="h-0.5" />}
          {group.map((item) => (
            <MenuItem key={item.label} {...item} />
          ))}
        </div>
      ))}
    </div>
  );
}

function Cursor() {
  return (
    <svg viewBox="0 0 12 19" className="absolute top-[343px] left-[902px] h-[19px] w-3" aria-hidden="true">
      <path d="M.5.8v15.500l3.600-3.400 2.400 5.400 2.300-1-2.400-5.300h5z" fill="#f3f1f5" stroke="#1b1b1f" strokeWidth=".9" />
    </svg>
  );
}

function Caption() {
  return (
    <div className="absolute inset-x-0 bottom-0 ml-0.5 h-28 border-b border-[#2f5aa8] bg-[#5786c8] pt-2 text-center text-[30px] leading-[49px] font-bold text-[#e4e8f3]">
      <p>
        <Label latin="text-[26px]">Win11_24H2_Korean_x64.ISO 다운로드가 끝나면, 다운로드 폴더로 이동하세요.</Label>
      </p>
      <p>
        <Label latin="text-[26px]">
          파일을 선택하고 마우스 오른쪽 클릭 후 ‘탑재’를 누르세요. 보안 경고 팝업이 뜨면, 무시하고 ‘열기’를 클릭하세요.
        </Label>
      </p>
    </div>
  );
}

export default function App() {
  return (
    <div className="relative h-screen w-full overflow-hidden bg-[#109be6] font-['Open_Sans','Noto_Sans_CJK_KR',sans-serif] text-[13px] leading-4">
      <Wallpaper />
      <div className="relative flex items-start">
        {DESKTOP.map((column, i) => (
          <div key={i} className="flex flex-col">
            {column.map((item) => (
              <DesktopIcon key={item.name ?? item.lines[0]} {...item} />
            ))}
          </div>
        ))}
      </div>
      <ExplorerWindow />
      <ContextMenu />
      <Cursor />
      <div className="absolute inset-x-0 bottom-0 h-10 bg-[#0d2f4a]" />
      <Caption />
    </div>
  );
}
